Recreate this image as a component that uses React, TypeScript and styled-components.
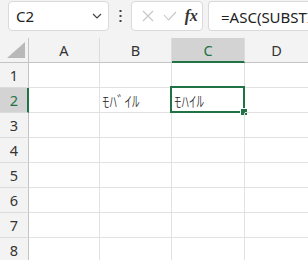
import React from "react";
import styled, { createGlobalStyle } from "styled-components";

const Global = createGlobalStyle`
  html, body { margin: 0; padding: 0; background: #f3f3f3; }
  body { font-family: "Noto Sans", "Noto Sans CJK JP", sans-serif; overflow: hidden; }
`;

const Page = styled.div`
  width: 308px;
  height: 260px;
  overflow: hidden;
  display: flex;
  flex-direction: column;
  background: #f3f3f3;
`;

const Toolbar = styled.div`
  padding: 1px 0 0 8px;
  display: flex;
  align-items: flex-start;
  box-sizing: border-box;
  flex: none;
  height: 38px;
`;

const NameBox = styled.div`
  width: 101px;
  height: 30px;
  box-sizing: border-box;
  border: 1px solid #dadada;
  border-radius: 4px;
  background: #fff;
  display: flex;
  align-items: center;
  padding: 0 6px 0 7px;
  font-size: 15px;
  color: #222;
`;

const NameText = styled.span`
  flex: 1;
`;

const Dots = styled.div`
  width: 22px;
  height: 30px;
  display: flex;
  align-items: center;
  justify-content: center;
`;

const ButtonGroup = styled.div`
  width: 72px;
  height: 30px;
  box-sizing: border-box;
  border: 1px solid #dadada;
  border-radius: 4px;
  background: #fff;
  display: flex;
  align-items: center;
  padding-left: 5px;
`;

const IconSlot = styled.div<{ $w: number }>`
  width: ${(p) => p.$w}px;
  height: 28px;
  display: flex;
  align-items: center;
  justify-content: center;
`;

const Fx = styled.span`
  font-family: "Liberation Serif", "DejaVu Serif", serif;
  font-style: italic;
  font-weight: bold;
  font-size: 16px;
  color: #333;
  letter-spacing: -0.5px;
`;

const FormulaBox = styled.div`
  margin-left: 5px;
  flex: 1;
  min-width: 0;
  height: 30px;
  box-sizing: border-box;
  border: 1px solid #dadada;
  border-right: none;
  border-radius: 4px 0 0 4px;
  background: #fff;
  display: flex;
  align-items: center;
  padding-left: 12px;
  font-size: 15px;
  color: #222;
  white-space: nowrap;
  overflow: hidden;
`;

const Grid = styled.div`
  display: grid;
  grid-template-columns: 29px 71px 72px 73px 1fr;
  grid-auto-rows: 25px;
  background: #fff;
  flex: 1;
`;

const ColHead = styled.div<{ $sel?: boolean; $last?: boolean }>`
  box-sizing: border-box;
  background: ${(p) => (p.$sel ? "#d3d3d3" : "#f3f3f3")};
  border-right: ${(p) => (p.$last ? "none" : "1px solid #dcdcdc")};
  border-bottom: ${(p) => (p.$sel ? "2px solid #217346" : "1px solid #c4c4c4")};
  display: flex;
  align-items: center;
  justify-content: center;
  font-size: 14.5px;
  color: ${(p) => (p.$sel ? "#217346" : "#333")};
  padding-top: ${(p) => (p.$sel ? "1px" : "0")};
`;

const Corner = styled.div`
  box-sizing: border-box;
  background: #f3f3f3;
  border-right: 1px solid #c4c4c4;
  border-bottom: 1px solid #c4c4c4;
  display: flex;
  align-items: flex-end;
  justify-content: flex-end;
  padding: 0 3px 4px 0;
`;

const RowHead = styled.div<{ $sel?: boolean }>`
  box-sizing: border-box;
  background: ${(p) => (p.$sel ? "#d3d3d3" : "#f3f3f3")};
  border-right: ${(p) => (p.$sel ? "2px solid #217346" : "1px solid #c4c4c4")};
  border-bottom: 1px solid #dcdcdc;
  display: flex;
  align-items: center;
  justify-content: center;
  font-size: 14.5px;
  color: ${(p) => (p.$sel ? "#217346" : "#333")};
  padding-left: ${(p) => (p.$sel ? "1px" : "0")};
`;

const Cell = styled.div<{ $last?: boolean }>`
  position: relative;
  box-sizing: border-box;
  border-right: ${(p) => (p.$last ? "none" : "1px solid #e1e1e1")};
  border-bottom: 1px solid #e1e1e1;
  display: flex;
  align-items: center;
  padding: 1px 0 0 2px;
  font-family: "Noto Sans CJK JP", sans-serif;
  font-size: 15px;
  font-weight: 300;
  color: #222;
  white-space: nowrap;
`;

const Selection = styled.div`
  position: absolute;
  left: -2px;
  top: -2px;
  right: -1px;
  bottom: -1px;
  border: 2px solid #217346;
  pointer-events: none;
`;

const Handle = styled.div`
  position: absolute;
  right: -5px;
  bottom: -5px;
  width: 6px;
  height: 6px;
  background: #217346;
  border: 1px solid #fff;
`;

const cols = ["A", "B", "C", "D"];

export default function App() {
  const rows = [1, 2, 3, 4, 5, 6, 7, 8];
  return (
    <>
      <Global />
      <Page>
        <Toolbar>
          <NameBox>
            <NameText>C2</NameText>
            <svg width="10" height="6" viewBox="0 0 10 6">
              <path d="M1 1 L5 5 L9 1" fill="none" stroke="#444" strokeWidth="1.2" />
            </svg>
          </NameBox>
          <Dots>
            <svg width="3" height="12" viewBox="0 0 3 12">
              <rect x="0.5" y="0" width="2" height="2" fill="#444" />
              <rect x="0.5" y="5" width="2" height="2" fill="#444" />
              <rect x="0.5" y="10" width="2" height="2" fill="#444" />
            </svg>
          </Dots>
          <ButtonGroup>
            <IconSlot $w={22}>
              <svg width="12" height="12" viewBox="0 0 12 12">
                <path d="M1 1 L11 11 M11 1 L1 11" stroke="#c6c6c6" strokeWidth="1.1" fill="none" />
              </svg>
            </IconSlot>
            <IconSlot $w={22}>
              <svg width="14" height="10" viewBox="0 0 14 10">
                <path d="M1 4 L5.5 9 L13 1" stroke="#c6c6c6" strokeWidth="1.1" fill="none" />
              </svg>
            </IconSlot>
            <IconSlot $w={20}>
              <Fx>fx</Fx>
            </IconSlot>
          </ButtonGroup>
          <FormulaBox>=ASC(SUBSTITUTE(B2,"ﾞ",""))</FormulaBox>
        </Toolbar>
        <Grid>
          <Corner>
            <svg width="18" height="16" viewBox="0 0 18 16">
              <path d="M0 16 L18 0 L18 16 Z" fill="#b9b9b9" />
            </svg>
          </Corner>
          {cols.map((c, i) => (
            <ColHead key={c} $sel={c === "C"} $last={i === cols.length - 1}>
              {c}
            </ColHead>
          ))}
          {rows.map((r) => (
            <React.Fragment key={r}>
              <RowHead $sel={r === 2}>{r}</RowHead>
              {cols.map((c, i) => {
                const active = r === 2 && c === "C";
                let text = "";
                if (r === 2 && c === "B") text = "ﾓﾊﾞｲﾙ";
                if (active) text = "ﾓﾊｲﾙ";
                return (
                  <Cell key={c} $last={i === cols.length - 1}>
                    {text}
                    {active && (
                      <Selection>
                        <Handle />
                      </Selection>
                    )}
                  </Cell>
                );
              })}
            </React.Fragment>
          ))}
        </Grid>
      </Page>
    </>
  );
}
